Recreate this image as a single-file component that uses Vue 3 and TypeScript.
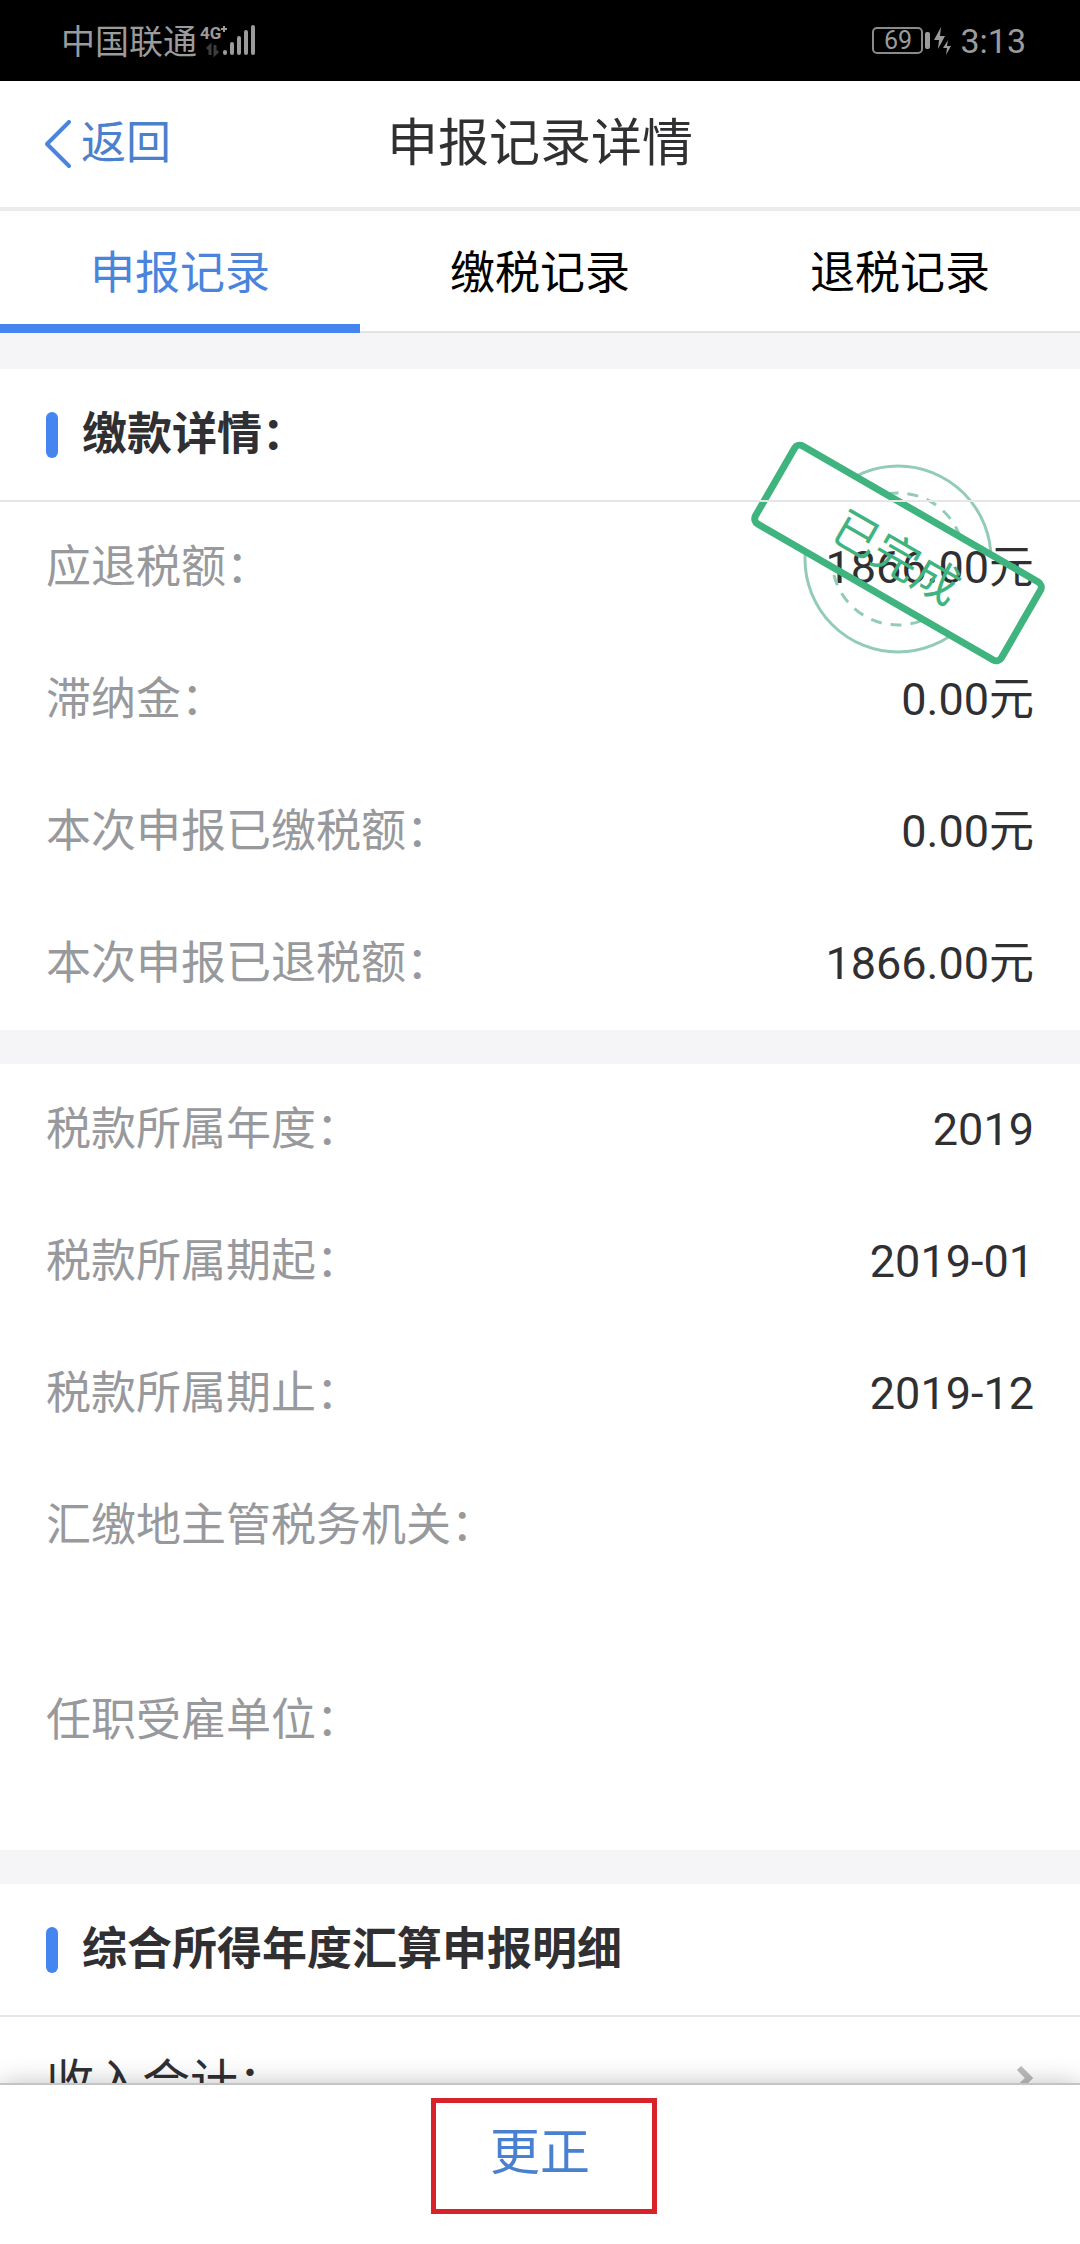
<script setup lang="ts">
import { ref } from 'vue'

interface Field {
  label: string
  value: string
  tall?: boolean
}

const tabs: string[] = ['申报记录', '缴税记录', '退税记录']
const activeTab = ref(0)

const payment: Field[] = [
  { label: '应退税额：', value: '1866.00元' },
  { label: '滞纳金：', value: '0.00元' },
  { label: '本次申报已缴税额：', value: '0.00元' },
  { label: '本次申报已退税额：', value: '1866.00元' },
]

const period: Field[] = [
  { label: '税款所属年度：', value: '2019' },
  { label: '税款所属期起：', value: '2019-01' },
  { label: '税款所属期止：', value: '2019-12' },
  { label: '汇缴地主管税务机关：', value: '', tall: true },
  { label: '任职受雇单位：', value: '', tall: true },
]
</script>

<template>
  <div class="app">
    <div class="status">
      <div class="status-side">
        <span class="carrier">中国联通</span>
        <svg class="signal" width="58" height="34" viewBox="0 0 58 34" aria-hidden="true">
          <text x="0" y="15" class="net">4G</text>
          <path d="M21 5h6M24 2v6" stroke="#9b9b9b" stroke-width="2" />
          <path d="M7 25l3-3v9M15 21v9l3-3" stroke="#3c3c3c" stroke-width="3" fill="none" />
          <path d="M25 28v1M32 20v9M39 14v15M46 8v21M53 3v26" stroke="#9b9b9b" stroke-width="4" stroke-linecap="round" />
        </svg>
      </div>
      <div class="status-side">
        <span class="battery">69</span>
        <svg class="charge" width="30" height="28" viewBox="0 0 30 28" aria-hidden="true">
          <rect x="2" y="5" width="5" height="17" rx="2" fill="#9b9b9b" />
          <path d="M18 0L11 13h5l-1 9 7-13h-5zM25 13l-5 8h4l-1 7 5-9h-4z" fill="#9b9b9b" />
        </svg>
        <span class="time">3:13</span>
      </div>
    </div>

    <header class="header">
      <button class="back" type="button">
        <svg width="26" height="48" viewBox="0 0 26 48" aria-hidden="true">
          <path d="M24 2L2 24l22 22" fill="none" stroke="#4a84dc" stroke-width="4" stroke-linecap="round" stroke-linejoin="round" />
        </svg>
        <span>返回</span>
      </button>
      <h1>申报记录详情</h1>
    </header>

    <nav class="tabs">
      <button
        v-for="(tab, i) in tabs"
        :key="tab"
        type="button"
        class="tab"
        :class="{ active: i === activeTab }"
        @click="activeTab = i"
      >
        {{ tab }}
      </button>
    </nav>

    <main class="content">
      <section class="card">
        <h2>缴款详情：</h2>
        <dl>
          <div v-for="f in payment" :key="f.label" class="row">
            <dt>{{ f.label }}</dt>
            <dd>{{ f.value }}</dd>
          </div>
        </dl>
        <svg class="stamp" width="300" height="228" viewBox="0 0 300 228" role="img" aria-label="已完成">
          <defs>
            <mask id="outside-plate">
              <rect width="300" height="228" fill="#fff" />
              <rect x="8" y="69" width="284" height="90" fill="#000" transform="rotate(30 150 114)" />
            </mask>
          </defs>
          <g fill="none" stroke="#93ccb6" stroke-width="3" mask="url(#outside-plate)">
            <circle cx="150" cy="120" r="93" />
            <circle cx="150" cy="120" r="66" stroke-dasharray="11 9" />
          </g>
          <g transform="rotate(30 150 114)">
            <rect x="8" y="69" width="284" height="90" rx="6" fill="none" stroke="#3fb47f" stroke-width="7" />
            <text x="151" y="135" text-anchor="middle" class="stamp-text">已完成</text>
          </g>
        </svg>
      </section>

      <section class="card">
        <dl>
          <div v-for="f in period" :key="f.label" class="row" :class="{ tall: f.tall }">
            <dt>{{ f.label }}</dt>
            <dd>{{ f.value }}</dd>
          </div>
        </dl>
      </section>

      <section class="card">
        <h2>综合所得年度汇算申报明细</h2>
        <a class="row link" href="#income">
          <span>收入合计：</span>
          <svg width="18" height="36" viewBox="0 0 18 36" aria-hidden="true">
            <path d="M3 3l10 10L3 23" fill="none" stroke="#bdbdc0" stroke-width="6" />
          </svg>
        </a>
      </section>
    </main>

    <footer class="footer">
      <button class="correct" type="button">更正</button>
    </footer>
  </div>
</template>

<style>
body {
  margin: 0;
}
</style>

<style scoped>
.app {
  height: 100vh;
  display: flex;
  flex-direction: column;
  overflow: hidden;
  background: #fff;
  color: #303033;
  font-family: Roboto, "Noto Sans CJK SC", sans-serif;
  font-size: 45px;
  line-height: 66px;
}

button {
  margin: 0;
  padding: 0;
  border: 0;
  background: none;
  color: inherit;
  font: inherit;
  cursor: pointer;
}

.status {
  flex: none;
  height: 81px;
  padding: 0 54px 0 61px;
  display: flex;
  align-items: center;
  justify-content: space-between;
  background: #000;
  color: #9b9b9b;
}

.status-side {
  display: flex;
  align-items: center;
}

.carrier {
  padding-top: 3px;
  font-size: 34px;
}

.signal {
  margin-left: 3px;
}

.net {
  font: 700 17px Roboto, sans-serif;
  fill: #9b9b9b;
}

.battery {
  box-sizing: border-box;
  width: 51px;
  height: 27px;
  border: 2px solid #8a8a8a;
  border-radius: 5px;
  font-size: 25px;
  line-height: 24px;
  text-align: center;
}

.charge {
  margin-right: 7px;
}

.time {
  font-size: 34px;
}

.header {
  flex: none;
  position: relative;
  height: 126px;
  display: flex;
  align-items: center;
  justify-content: center;
  border-bottom: 4px solid #ebebeb;
}

.header h1 {
  margin: 0;
  font-size: 51px;
  font-weight: 400;
}

.back {
  position: absolute;
  left: 45px;
  top: 0;
  bottom: 0;
  display: flex;
  align-items: center;
  gap: 10px;
  color: #4a80cc;
}

.tabs {
  flex: none;
  display: flex;
  background: linear-gradient(#e2e2e4, #e2e2e4) bottom / 100% 2px no-repeat;
}

.tab {
  box-sizing: border-box;
  flex: 1;
  height: 122px;
  padding-top: 12px;
  border-bottom: 9px solid transparent;
  color: #000;
}

.tab.active {
  border-bottom-color: #4585f0;
  color: #4a84dc;
}

.content {
  flex: 1;
  min-height: 0;
  overflow: hidden;
  background: #f5f5f8;
}

.card {
  position: relative;
  margin-top: 34px;
  background: #fff;
}

.card:first-child {
  margin-top: 36px;
}

.card h2 {
  position: relative;
  z-index: 1;
  box-sizing: border-box;
  height: 133px;
  margin: 0;
  padding: 0 46px;
  display: flex;
  align-items: center;
  gap: 24px;
  border-bottom: 2px solid #e6e6e8;
  font-size: 45px;
  font-weight: 700;
}

.card h2::before {
  content: "";
  width: 12px;
  height: 46px;
  border-radius: 6px;
  background: #4585f0;
}

dl,
dd {
  margin: 0;
}

.row {
  box-sizing: border-box;
  min-height: 132px;
  padding: 33px 46px;
  display: flex;
  justify-content: space-between;
}

.row.tall {
  min-height: 195px;
}

dt {
  color: #98999c;
}

.link {
  align-items: center;
  color: inherit;
  font-size: 48px;
  text-decoration: none;
}

.stamp {
  position: absolute;
  right: 32px;
  top: 70px;
}

.stamp-text {
  font-size: 46px;
  fill: #3fb47f;
}

.footer {
  flex: none;
  position: relative;
  box-sizing: border-box;
  height: 161px;
  padding-top: 13px;
  display: flex;
  justify-content: center;
  align-items: flex-start;
  border-top: 2px solid #c4c4c6;
  background: #fff;
  box-shadow: 0 0 24px rgba(0, 0, 0, 0.24);
}

.correct {
  box-sizing: border-box;
  width: 226px;
  height: 116px;
  margin-left: 8px;
  padding: 0 8px 6px 0;
  border: 5px solid #d8232a;
  color: #4a80d0;
  font-size: 50px;
}
</style>
